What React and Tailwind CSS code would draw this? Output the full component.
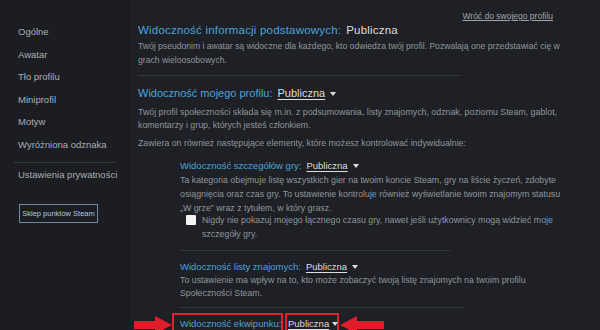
const NAV = ['Ogólne', 'Awatar', 'Tło profilu', 'Miniprofil', 'Motyw', 'Wyróżniona odznaka']

const Caret = ({ className = 'ml-[5px]' }) => (
  <svg width="6" height="4" viewBox="0 0 6 4" className={`inline-block align-middle ${className}`}>
    <path d="M0 0h6L3 4z" fill="#dcdedf" />
  </svg>
)

const Value = () => (
  <span className="text-[#dcdedf] ml-[5px]">
    <span className="underline underline-offset-2">Publiczna</span>
    <Caret />
  </span>
)

const Divider = ({ w, className }) => <div className={`h-px bg-[#34373e] ${w} ${className}`} />

export default function App() {
  return (
    <div className="w-[600px] h-[330px] overflow-hidden flex bg-[#1e2025] font-['Liberation_Sans',Arial,sans-serif]">
      <aside className="w-[130px] shrink-0 bg-[#1b1d22] pt-[25px]">
        {NAV.map(n => (
          <div key={n} className="pl-[18px] h-[22.5px] leading-[14px] text-[9.5px] text-[#a9aeb3]">{n}</div>
        ))}
        <div className="mx-[14px] mt-[2px] h-px bg-[#34373e]" />
        <div className="pl-[18px] mt-[5px] leading-[14px] text-[9.5px] text-[#a9aeb3]">Ustawienia prywatności</div>
        <button className="ml-[19px] mt-[22px] w-[79px] h-[19px] border border-[#6f8aa3] text-[7.5px] text-[#a8c7e3] leading-[17px]">
          Sklep punktów Steam
        </button>
      </aside>

      <main className="flex-1 pl-[8px] pr-[35px] pt-[10px]">
        <div className="h-[12px] leading-[12px] text-right pr-[12px] text-[8.5px] text-[#a0a5aa]">
          <span className="underline">Wróć do swojego profilu</span>
        </div>

        <div className="h-[16px] leading-[16px] text-[11.5px] tracking-[0.2px] text-[#4ea3d8]">
          Widoczność informacji podstawowych:<span className="text-[#dcdedf] ml-[5px]">Publiczna</span>
        </div>
        <p className="mt-[1px] leading-[14px] text-[8.6px] text-[#8f969c]">
          Twój pseudonim i awatar są widoczne dla każdego, kto odwiedza twój profil. Pozwalają one przedstawiać cię w grach wieloosobowych.
        </p>
        <Divider w="w-[322px]" className="mt-[8px]" />

        <div className="mt-[9px] h-[16px] leading-[16px] text-[11px] text-[#4ea3d8]">
          Widoczność mojego profilu:<Value />
        </div>
        <p className="mt-[5px] leading-[13px] text-[8.8px] text-[#8f969c]">
          Twój profil społeczności składa się m.in. z podsumowania, listy znajomych, odznak, poziomu Steam, gablot, komentarzy i grup, których jesteś członkiem.
        </p>
        <p className="mt-[5px] leading-[13px] text-[8.8px] text-[#8f969c]">
          Zawiera on również następujące elementy, które możesz kontrolować indywidualnie:
        </p>

        <div className="ml-[42px]">
          <div className="mt-[9px] h-[14px] leading-[14px] text-[9.5px] text-[#4ea3d8]">
            Widoczność szczegółów gry:<Value />
          </div>
          <p className="leading-[14px] text-[8.8px] text-[#8f969c]">
            Ta kategoria obejmuje listę wszystkich gier na twoim koncie Steam, gry na liście życzeń, zdobyte osiągnięcia oraz czas gry. To ustawienie kontroluje również wyświetlanie twoim znajomym statusu „W grze” wraz z tytułem, w który grasz.
          </p>
          <div className="flex mt-[-2px] pl-[6px]">
            <div className="w-[10px] h-[10px] bg-[#f2f2f2] rounded-[1px] mt-[2px] shrink-0" />
            <p className="ml-[6px] leading-[14px] text-[8.8px] text-[#8f969c]">
              Nigdy nie pokazuj mojego łącznego czasu gry, nawet jeśli użytkownicy mogą widzieć moje szczegóły gry.
            </p>
          </div>
          <Divider w="w-[270px]" className="mt-[9px]" />

          <div className="mt-[9px] h-[14px] leading-[14px] text-[9.5px] text-[#4ea3d8]">
            Widoczność listy znajomych:<Value />
          </div>
          <p className="leading-[13px] text-[8.8px] text-[#8f969c]">
            To ustawienie ma wpływ na to, kto może zobaczyć twoją listę znajomych na twoim profilu Społeczności Steam.
          </p>
          <Divider w="w-[285px]" className="mt-[7px]" />

          <div className="relative mt-[5px] flex items-start whitespace-nowrap text-[9.5px] text-[#4ea3d8]">
            <svg width="38" height="18" viewBox="0 0 38 18" className="absolute left-[-46px] top-[3px]">
              <path d="M0 5h21V0l17 9-17 9v-5H0z" fill="#e11d2a" />
            </svg>
            <span className="ml-[-8px] w-[111px] pl-[6px] pt-[2px] h-[20px] leading-[14px] border-2 border-[#e0202c]">Widoczność ekwipunku:</span>
            <span className="ml-[2px] w-[54px] pl-[1px] pt-[2px] h-[20px] leading-[14px] border-2 border-[#e0202c] text-[#dcdedf]">
              <span className="underline underline-offset-2">Publiczna</span><Caret className="ml-[3px]" />
            </span>
            <svg width="44" height="18" viewBox="0 0 44 18" className="ml-[1px] mt-[3px]">
              <path d="M44 5H17V0L0 9l17 9v-5h27z" fill="#e11d2a" />
            </svg>
          </div>
        </div>
      </main>
    </div>
  )
}
